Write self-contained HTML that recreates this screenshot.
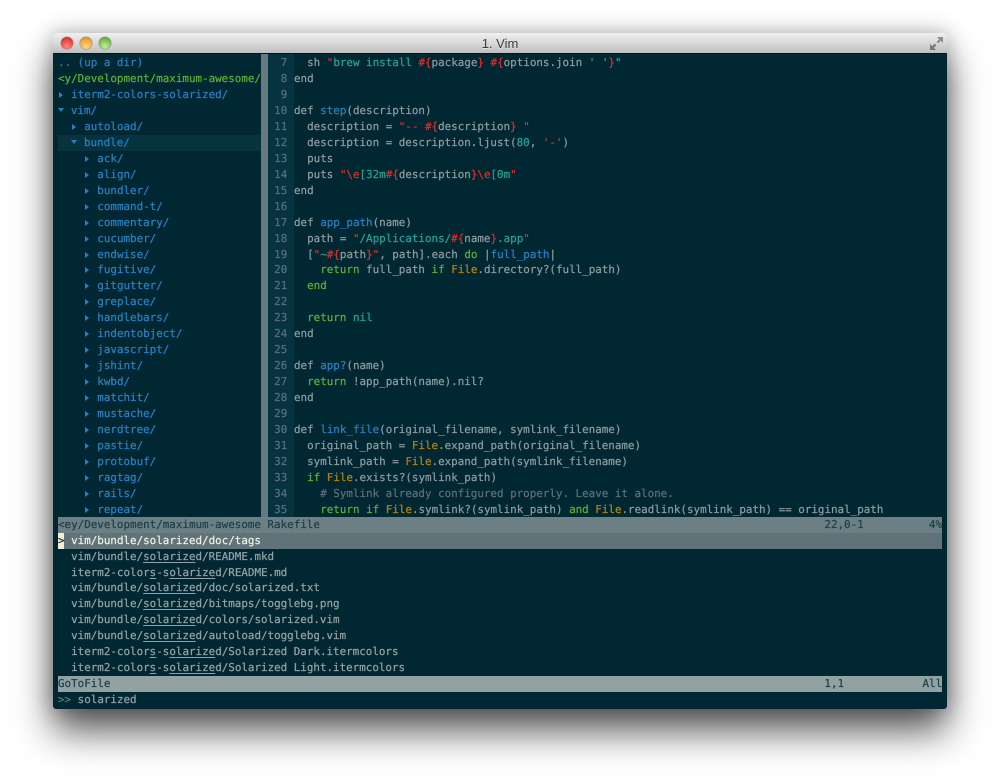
<!DOCTYPE html>
<html><head><meta charset="utf-8"><title>1. Vim</title>
<style>
html,body{margin:0;padding:0;background:#fff;width:1000px;height:783px;overflow:hidden}
#win{position:absolute;left:53px;top:33px;width:894px;height:676px;border-radius:5px 5px 3px 3px;box-shadow:0 22px 38px rgba(0,0,0,.66),0 0 20px rgba(0,0,0,.26)}
#title{position:absolute;left:0;top:0;width:894px;height:21px;border-radius:5px 5px 0 0;background:linear-gradient(#f0f0f0,#dcdcdc 40%,#bcbcbc);font:13px/21px "Liberation Sans",sans-serif;color:#3c3c3c;text-align:center;text-shadow:0 1px 0 rgba(255,255,255,.5)}
.dot{position:absolute;top:4px;width:12px;height:12px;border-radius:50%;box-shadow:0 0 0 .5px rgba(70,70,70,.5)}
#term{position:absolute;left:53px;top:53px;width:894px;height:656px;background:#012732;border-top:1px solid #111;box-sizing:border-box;border-radius:0 0 3px 3px;overflow:hidden}
pre{position:absolute;margin:0;font-family:"DejaVu Sans Mono","Liberation Mono",monospace;font-size:10.88px;line-height:15.93px;text-rendering:geometricPrecision;color:#8d9da0;white-space:pre;filter:blur(.35px);-webkit-text-stroke:.22px currentColor}
.bar{position:absolute;left:4.5px;width:884.5px}
.r{color:#d8312f}.c{color:#2aa198}.g{color:#5cb136}.y{color:#b58212}.b{color:#2a80c2}
u{text-decoration:underline;text-underline-offset:2px;text-decoration-thickness:1px}
i.cl{display:inline-block;width:0;height:0;border-left:4px solid #2a80c2;border-top:3.5px solid transparent;border-bottom:3.5px solid transparent;margin:0 1.55px 0 1px;vertical-align:0}
i.op{display:inline-block;width:0;height:0;border-top:4px solid #2a80c2;border-left:3.5px solid transparent;border-right:3.5px solid transparent;margin:0 .55px 0 -.25px;vertical-align:2px}
</style></head><body>
<div id="win">
<div id="title">1. Vim
<div class="dot" style="left:7.5px;background:radial-gradient(circle at 50% 78%,#ff8a84,#e8403b 62%,#b9231f)"></div>
<div class="dot" style="left:26.5px;background:radial-gradient(circle at 50% 78%,#ffd98a,#eca632 62%,#bb7a16)"></div>
<div class="dot" style="left:45.5px;background:radial-gradient(circle at 50% 78%,#c6f09a,#74bd4c 62%,#4a8c30)"></div>
<svg style="position:absolute;left:876px;top:3px" width="15" height="15" viewBox="0 0 15 15"><path d="M8 1h6v6l-2.2-2.2-2.6 2.6-1.6-1.6 2.6-2.6z" fill="#8d8d8d"/><path d="M7 14H1V8l2.2 2.2 2.6-2.6 1.6 1.6-2.6 2.6z" fill="#777"/></svg>
</div>
</div>
<div id="term">
<div style="position:absolute;left:5px;top:81.4px;width:203px;height:15.9px;background:#06333f"></div>
<div style="position:absolute;left:208px;top:0;width:6.5px;height:463px;background:#667a80"></div>
<div style="position:absolute;left:214.5px;top:0;width:26.5px;height:463px;background:#06333f"></div>
<div class="bar" style="top:462.7px;height:16px;background:#6c7f85"></div>
<div class="bar" style="top:478.7px;height:16px;background:#5f7378"></div>
<div style="position:absolute;left:4.5px;top:478.7px;width:6.5px;height:16px;background:#f6efd8"></div>
<div class="bar" style="top:622px;height:16px;background:#92a2a2"></div>

<pre class="b" style="left:5px;top:1.3px">.. (up a dir)
<span class="g">&lt;y/Development/maximum-awesome/</span>
<i class="cl"></i> iterm2-colors-solarized/
<i class="op"></i> vim/
  <i class="cl"></i> autoload/
  <i class="op"></i> bundle/
    <i class="cl"></i> ack/
    <i class="cl"></i> align/
    <i class="cl"></i> bundler/
    <i class="cl"></i> command-t/
    <i class="cl"></i> commentary/
    <i class="cl"></i> cucumber/
    <i class="cl"></i> endwise/
    <i class="cl"></i> fugitive/
    <i class="cl"></i> gitgutter/
    <i class="cl"></i> greplace/
    <i class="cl"></i> handlebars/
    <i class="cl"></i> indentobject/
    <i class="cl"></i> javascript/
    <i class="cl"></i> jshint/
    <i class="cl"></i> kwbd/
    <i class="cl"></i> matchit/
    <i class="cl"></i> mustache/
    <i class="cl"></i> nerdtree/
    <i class="cl"></i> pastie/
    <i class="cl"></i> protobuf/
    <i class="cl"></i> ragtag/
    <i class="cl"></i> rails/
    <i class="cl"></i> repeat/</pre>

<pre style="left:214.6px;top:1.3px;color:#56707a">  7
  8
  9
 10
 11
 12
 13
 14
 15
 16
 17
 18
 19
 20
 21
 22
 23
 24
 25
 26
 27
 28
 29
 30
 31
 32
 33
 34
 35</pre>

<pre style="left:241px;top:1.3px">  sh <span class="r">"</span><span class="c">brew install </span><span class="r">#{</span>package<span class="r">}</span><span class="c"> </span><span class="r">#{</span>options.join <span class="c">' '</span><span class="r">}</span><span class="c">"</span>
end

def <span class="b">step</span>(description)
  description = <span class="r">"-- #{</span>description<span class="r">} "</span>
  description = description.ljust(<span class="c">80</span>, <span class="r">'-'</span>)
  puts
  puts <span class="r">"\e</span><span class="c">[32m</span><span class="r">#{</span>description<span class="r">}\e</span><span class="c">[0m</span><span class="r">"</span>
end

def <span class="b">app_path</span>(name)
  path = <span class="r">"</span><span class="c">/Applications/</span><span class="r">#{</span>name<span class="r">}</span><span class="c">.app</span><span class="r">"</span>
  [<span class="r">"</span><span class="c">~</span><span class="r">#{</span>path<span class="r">}"</span>, path].each <span class="g">do</span> |<span class="b">full_path</span>|
    <span class="g">return</span> full_path <span class="g">if</span> <span class="y">File</span>.directory?(full_path)
  <span class="g">end</span>

  <span class="g">return</span> <span class="c">nil</span>
end

def <span class="b">app?</span>(name)
  <span class="g">return</span> !app_path(name).nil?
end

def <span class="b">link_file</span>(original_filename, symlink_filename)
  original_path = <span class="y">File</span>.expand_path(original_filename)
  symlink_path = <span class="y">File</span>.expand_path(symlink_filename)
  <span class="g">if</span> <span class="y">File</span>.exists?(symlink_path)
    <span style="color:#5b7079"># Symlink already configured properly. Leave it alone.</span>
    <span class="g">return</span> <span class="g">if</span> <span class="y">File</span>.symlink?(symlink_path) <span class="g">and</span> <span class="y">File</span>.readlink(symlink_path) == original_path</pre>

<pre style="left:5px;top:462.7px;color:#1c3f4a">&lt;ey/Development/maximum-awesome Rakefile</pre>
<pre style="left:771.4px;top:462.7px;color:#1c3f4a">22,0-1</pre>
<pre style="left:876px;top:462.7px;color:#1c3f4a">4%</pre>
<pre style="left:5px;top:478.7px;color:#f0f0e4"><span style="color:#1c2f35">&gt;</span> vim/bundle/solarized/doc/tags</pre>
<pre style="left:5px;top:494.6px;color:#93a3a5">  vim/bundle/<u>solarize</u>d/README.mkd
  iterm2-color<u>s</u>-s<u>olarize</u>d/README.md
  vim/bundle/<u>solarize</u>d/doc/solarized.txt
  vim/bundle/<u>solarize</u>d/bitmaps/togglebg.png
  vim/bundle/<u>solarize</u>d/colors/solarized.vim
  vim/bundle/<u>solarize</u>d/autoload/togglebg.vim
  iterm2-color<u>s</u>-s<u>olarize</u>d/Solarized Dark.itermcolors
  iterm2-color<u>s</u>-s<u>olarize</u>d/Solarized Light.itermcolors</pre>
<pre style="left:5px;top:622px;color:#1c3f4a">GoToFile</pre>
<pre style="left:771.4px;top:622px;color:#1c3f4a">1,1</pre>
<pre style="left:869.5px;top:622px;color:#1c3f4a">All</pre>
<pre style="left:5px;top:638px"><span style="color:#5f7a84">&gt;&gt;</span> <span style="color:#93a3a5">solarized</span></pre>
</div>
</body></html>
